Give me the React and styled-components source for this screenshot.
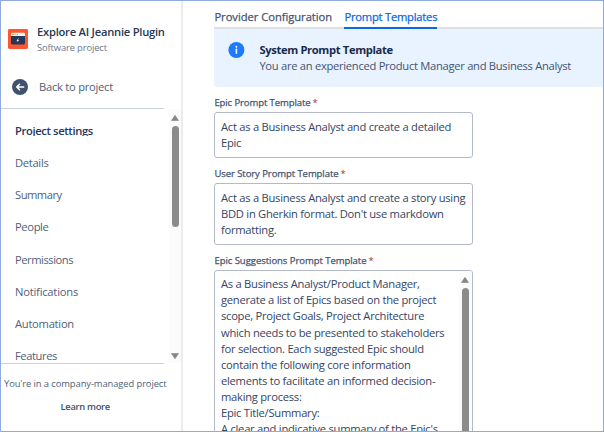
import React from 'react';
import styled, { createGlobalStyle } from 'styled-components';

const Global = createGlobalStyle`
  *, *::before, *::after { box-sizing: border-box; }
  body { margin: 0; background: #fff; font-family: "Open Sans", "Noto Sans", sans-serif; }
`;

const Frame = styled.div`
  display: flex;
  width: 604px;
  height: 432px;
  overflow: hidden;
  border: 1px solid #8faadc;
  background: #fff;
`;

const Text = styled.span`
  display: block;
  white-space: pre;
  font-size: ${(p) => p.$size || 11.2}px;
  line-height: 16px;
  font-weight: ${(p) => p.$weight || 400};
  letter-spacing: ${(p) => p.$ls || 0}px;
  color: ${(p) => p.$color || '#44546f'};
`;

const MediumText = styled(Text)`
  -webkit-text-stroke: 0.25px currentColor;
`;

const Sidebar = styled.aside`
  display: flex;
  flex-direction: column;
  flex: none;
  width: 182px;
  border-right: 2px solid #ebecf0;
`;

const ProjectHeader = styled.header`
  display: flex;
  gap: 9px;
  height: 65px;
  padding: 23px 0 0 7px;
  svg { flex: none; margin-top: 5px; }
`;

const BackLink = styled.a`
  display: flex;
  align-items: center;
  gap: 11px;
  height: 42px;
  padding-left: 11px;
`;

const Divider = styled.div`
  flex: none;
  width: 163px;
  height: 1px;
  background: #cbd1df;
`;

const NavArea = styled.div`
  display: flex;
  justify-content: space-between;
  height: 254px;
  overflow: hidden;
`;

const NavList = styled.nav`
  display: flex;
  flex-direction: column;
  padding: 14px 0 0 14px;
`;

const NavItem = styled(Text)`
  flex: none;
  height: 32.15px;
`;

const NavTitle = styled(Text)`
  flex: none;
  height: 13px;
  margin-bottom: 19.15px;
  overflow: hidden;
`;

const ScrollTrack = styled.div`
  display: flex;
  flex-direction: column;
  align-items: center;
  flex: none;
  width: ${(p) => p.$width}px;
  padding: 6px 0 4px;
  background: #fbfbfb;
  svg { flex: none; }
`;

const ScrollThumb = styled.div`
  flex: none;
  width: 7px;
  height: ${(p) => p.$height}px;
  margin: 5px 0 auto;
  border-radius: 4px;
  background: #8b8b8b;
`;

const SidebarFooter = styled.footer`
  display: flex;
  flex-direction: column;
  gap: 7px;
  padding: 12px 0 0 3px;
`;

const LearnMore = styled(Text)`
  margin-left: 56.5px;
`;

const Main = styled.main`
  display: flex;
  flex-direction: column;
  flex: 1;
  min-width: 0;
  padding-left: 31.4px;
`;

const Tabs = styled.div`
  display: flex;
  flex: none;
  gap: 13px;
  height: 28px;
  padding-top: 8px;
  box-shadow: inset 0 -2px #dcdfe4;
`;

const Tab = styled(MediumText)`
  width: ${(p) => p.$width}px;
  height: 20px;
  border-bottom: 2px solid ${(p) => (p.$active ? '#0c66e4' : 'transparent')};
`;

const Banner = styled.section`
  display: flex;
  flex: none;
  gap: 14px;
  height: 58px;
  padding: 13px 0 0 14px;
  border-radius: 0 0 0 3px;
  background: #e9f2ff;
`;

const Field = styled.div`
  display: flex;
  flex-direction: column;
  flex: none;
  margin-top: ${(p) => p.$top}px;
`;

const Label = styled.label`
  display: flex;
  gap: 2px;
  height: 17px;
`;

const TextBox = styled.div`
  display: flex;
  justify-content: space-between;
  width: 258.6px;
  height: ${(p) => p.$height}px;
  overflow: hidden;
  border: 1px solid #b3b9c7;
  border-radius: 3px;
`;

const Lines = styled.div`
  padding: ${(p) => p.$top}px 0 0 5.6px;
`;

const Line = styled(Text)`
  line-height: 16.1px;
  color: #344563;
`;

const ProjectLogo = () => (
  <svg width="20" height="20" viewBox="0 0 20 20">
    <rect width="20" height="20" rx="1.4" fill="#ff5630" />
    <path d="M3 7h14v7a1.5 1.5 0 0 1-1.5 1.5h-11A1.5 1.5 0 0 1 3 14z" fill="#253858" />
    <path d="M3 7V5a1.2 1.2 0 0 1 1.2-1.2h11.6A1.2 1.2 0 0 1 17 5v2z" fill="#f4f5f7" />
    <circle cx="4.9" cy="5.5" r=".8" fill="#ff7452" />
    <circle cx="7.1" cy="5.5" r=".8" fill="#ffc400" />
    <circle cx="9.3" cy="5.5" r=".8" fill="#57d9a3" />
    <path d="M10.4 9.2 8.5 11.7h1.2L9 13.6l2.2-2.7H9.9l.9-1.7z" fill="#fff" />
  </svg>
);

const BackIcon = () => (
  <svg width="16" height="16" viewBox="0 0 16 16">
    <circle cx="8" cy="8" r="8" fill="#42526e" />
    <path d="M11.7 8H4.9M7.5 5.2 4.7 8l2.8 2.8" fill="none" stroke="#fff" strokeWidth="1.5" strokeLinecap="round" strokeLinejoin="round" />
  </svg>
);

const InfoIcon = () => (
  <svg width="17" height="17" viewBox="0 0 17 17">
    <circle cx="8.4" cy="8" r="8" fill="#1d7afc" />
    <circle cx="8.4" cy="4.8" r=".95" fill="#fff" />
    <path d="M8.4 7.2v4" stroke="#fff" strokeWidth="1.6" strokeLinecap="round" />
  </svg>
);

const Arrow = ({ down }) => (
  <svg width="8" height="6" viewBox="0 0 8 6">
    <path d={down ? 'M.5.5h7L4 5.7z' : 'M.5 5.5h7L4 .3z'} fill="#858585" stroke="#858585" strokeWidth=".6" strokeLinejoin="round" />
  </svg>
);

const NAV = [
  ['Details', -0.31],
  ['Summary', -0.5],
  ['People', -0.37],
  ['Permissions', -0.46],
  ['Notifications', -0.22],
  ['Automation', -0.27],
  ['Features', -0.42],
];

const FIELDS = [
  {
    label: 'Epic Prompt Template', ls: -0.09, top: 8, height: 46, pad: 6,
    lines: ['Act as a Business Analyst and create a detailed', 'Epic'],
  },
  {
    label: 'User Story Prompt Template', ls: -0.07, top: 8, height: 62, pad: 6,
    lines: ['Act as a Business Analyst and create a story using', "BDD in Gherkin format. Don't use markdown", 'formatting.'],
  },
  {
    label: 'Epic Suggestions Prompt Template', ls: -0.04, top: 8, height: 200, pad: 5.3, scroll: true,
    lines: [
      'As a Business Analyst/Product Manager,',
      'generate a list of Epics based on the project',
      'scope, Project Goals, Project Architecture',
      'which needs to be presented to stakeholders',
      'for selection. Each suggested Epic should',
      'contain the following core information',
      'elements to facilitate an informed decision-',
      'making process:',
      'Epic Title/Summary:',
      "A clear and indicative summary of the Epic's",
    ],
  },
];

export default function App() {
  return (
    <>
      <Global />
      <Frame>
        <Sidebar>
          <ProjectHeader>
            <ProjectLogo />
            <div>
              <Text $weight={600} $ls={-0.24} $color="#253858">Explore AI Jeannie Plugin</Text>
              <Text $size={9.4} $ls={-0.13} $color="#6b778c">Software project</Text>
            </div>
          </ProjectHeader>
          <BackLink>
            <BackIcon />
            <Text $ls={-0.26} $color="#505f79">Back to project</Text>
          </BackLink>
          <Divider />
          <NavArea>
            <NavList>
              <NavTitle $weight={600} $ls={-0.36} $color="#253858">Project settings</NavTitle>
              {NAV.map(([name, ls]) => (
                <NavItem key={name} $ls={ls} $color="#505f79">{name}</NavItem>
              ))}
            </NavList>
            <ScrollTrack $width={12}>
              <Arrow />
              <ScrollThumb $height={101} />
              <Arrow down />
            </ScrollTrack>
          </NavArea>
          <Divider />
          <SidebarFooter>
            <Text $size={9.4} $ls={-0.09} $color="#505f79">You're in a company-managed project</Text>
            <LearnMore $size={9.4} $weight={600} $ls={-0.31} $color="#42526e">Learn more</LearnMore>
          </SidebarFooter>
        </Sidebar>
        <Main>
          <Tabs>
            <Tab $width={117} $ls={-0.03}>Provider Configuration</Tab>
            <Tab $width={93} $weight={500} $ls={-0.22} $color="#0c66e4" $active>Prompt Templates</Tab>
          </Tabs>
          <Banner>
            <InfoIcon />
            <div>
              <Text $weight={700} $ls={-0.35} $color="#172b4d">System Prompt Template</Text>
              <Text $ls={-0.29}>You are an experienced Product Manager and Business Analyst</Text>
            </div>
          </Banner>
          {FIELDS.map((f) => (
            <Field key={f.label} $top={f.top}>
              <Label>
                <MediumText $size={9.5} $weight={500} $ls={f.ls}>{f.label}</MediumText>
                <Text $size={9.5} $color="#ae2e24">*</Text>
              </Label>
              <TextBox $height={f.height}>
                <Lines $top={f.pad}>
                  {f.lines.map((line) => (
                    <Line key={line} $ls={-0.26}>{line}</Line>
                  ))}
                </Lines>
                {f.scroll && (
                  <ScrollTrack $width={13}>
                    <Arrow />
                    <ScrollThumb $height={180} />
                  </ScrollTrack>
                )}
              </TextBox>
            </Field>
          ))}
        </Main>
      </Frame>
    </>
  );
}
